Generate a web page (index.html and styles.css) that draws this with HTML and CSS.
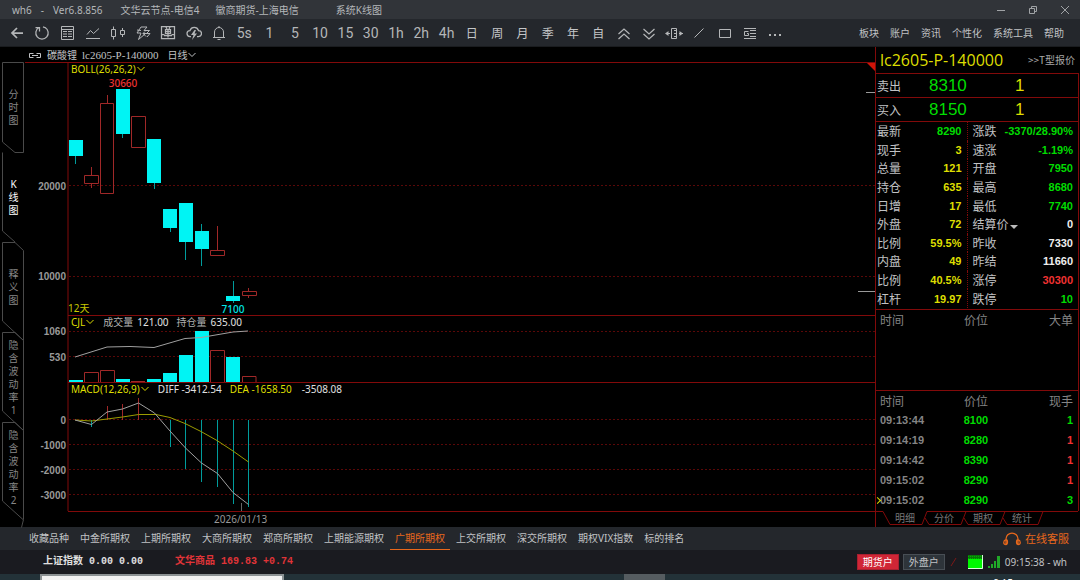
FILE: index.html
```html
<!DOCTYPE html>
<html lang="zh-CN">
<head>
<meta charset="utf-8">
<meta name="viewport" content="width=device-width, initial-scale=1">
<title>wh6 - 系统K线图</title>
<link rel="stylesheet" href="styles.css">
</head>
<body>
<header class="titlebar">
  <span>wh6</span><span>-</span><span>Ver6.8.856</span>
  <span class="node">文华云节点-电信4</span>
  <span class="broker">徽商期货-上海电信</span>
  <span class="view">系统K线图</span>
  <div class="window-buttons">
    <button type="button" aria-label="最小化"><svg width="10" height="10"><path d="M1 5.5h8"/></svg></button>
    <button type="button" aria-label="还原"><svg width="10" height="10"><path d="M1.500 3.500h5v5h-5zM3.500 3.500v-2h5v5h-2"/></svg></button>
    <button type="button" aria-label="关闭"><svg width="10" height="10"><path d="M1 1l8 8M9 1l-8 8"/></svg></button>
  </div>
</header>

<nav class="toolbar" aria-label="工具栏">
  <div class="tools">
    <button type="button" aria-label="返回"><svg width="16" height="16"><path class="bold" d="M14 8H3M8 3L3 8l5 5"/></svg></button>
    <button type="button" aria-label="刷新"><svg width="16" height="16"><path class="medium" d="M5 2.500a6.200 6.200 0 1 0 6 0M1.500 2.500h4v4M9 1.800l3 1.200"/></svg></button>
    <button type="button" aria-label="报价"><svg width="16" height="16"><path d="M2.500 1.500h12v13h-12zM2.500 4.500h12M4 6.500h4M9 6.500h4M4 9h4M9 9h4M4 11.500h4M9 11.500h4"/></svg></button>
    <button type="button" aria-label="分时"><svg width="16" height="16"><path d="M2 9.500l3.500-4 3 3L14 3.500M1 13.500h14"/></svg></button>
    <button type="button" aria-label="K线"><svg width="16" height="16"><path d="M1.500 4.500h4v7h-4zM3.500 1.500v3M3.500 11.500v3M10.500 5.500h4v4h-4zM12.500 3v2.500M12.500 9.500V12"/></svg></button>
    <button type="button" aria-label="闪电下单"><svg width="16" height="16"><path d="M6 2h6L9 5.500h5.500L12 8M6 2L2 8h4l-2.500 6.500L10 9M2 5l4 .5M8 8.500h7M10 6.500L8 8.500l3 3M15 8.500l-3 3.500"/></svg></button>
    <button type="button" aria-label="下单"><svg width="16" height="16"><path class="medium" d="M1.500 1.500h13v12h-13zM1.500 9.500h3M11.500 9.500h3M5.500 4.500h5v4h-5zM5.500 6.500h5M8 4.500v8M4 10.500h8M6 2l1 2M10 2L9 4"/></svg></button>
    <button type="button" aria-label="云条件单"><svg width="16" height="16"><path class="medium" d="M5 11.500H4a3 3 0 0 1 0-6 4.500 4.500 0 0 1 8.500 0 3 3 0 0 1 0 6H11"/><path class="solid" d="M8.500 5L5 10h2.500L6 15l5-6.500H8.500L10 5z"/></svg></button>
    <button type="button" aria-label="预警"><svg width="16" height="16"><path d="M2 12.500h12M3.500 12.500V7a4.500 4.500 0 0 1 9 0v5.500M6.500 14.500h3M8 1v1.500"/></svg></button>
    <button type="button">5s</button>
    <button type="button">1</button>
    <button type="button">5</button>
    <button type="button">10</button>
    <button type="button">15</button>
    <button type="button">30</button>
    <button type="button">1h</button>
    <button type="button">2h</button>
    <button type="button">4h</button>
    <button type="button" class="cjk">日</button>
    <button type="button" class="cjk">周</button>
    <button type="button" class="cjk">月</button>
    <button type="button" class="cjk">季</button>
    <button type="button" class="cjk">年</button>
    <button type="button" class="cjk">自</button>
    <button type="button" aria-label="放大"><svg width="16" height="16"><path class="medium" d="M2.500 9L8 4l5.500 5M2.500 14L8 9l5.500 5"/></svg></button>
    <button type="button" aria-label="缩小"><svg width="16" height="16"><path class="medium" d="M2.500 4L8 9l5.500-5M2.500 9L8 14l5.500-5"/></svg></button>
    <button type="button" aria-label="间距"><svg width="18" height="16"><path d="M6.500 3.500h5v10h-5zM9 5.500h2.500M9 8.500h2.500M9 11.500h2.500M1 8.500h4M14 8.500h4"/><path class="solid" d="M0 8.500L3.500 6v5zM18 8.500L14.500 6v5z"/></svg></button>
    <button type="button" aria-label="画线"><svg width="16" height="16"><path d="M3.500 12.500l9-9"/></svg></button>
    <button type="button" aria-label="矩形"><svg width="16" height="16"><path d="M2.500 4.500h11v8h-11z"/></svg></button>
    <button type="button" aria-label="公告"><svg width="16" height="16"><path d="M2 3.500h12M2 13.500h12M8 5.500h6M8 8.500h6M8 11.500h6M6.500 6.500h-4v4h4v-2H5"/></svg></button>
    <button type="button" aria-label="更多"><svg width="16" height="16"><path class="solid" d="M2 9h2v2H2zM7 9h2v2H7zM12 9h2v2h-2z"/></svg></button>
  </div>
  <div class="menu">
    <button type="button">板块</button>
    <button type="button">账户</button>
    <button type="button">资讯</button>
    <button type="button">个性化</button>
    <button type="button">系统工具</button>
    <button type="button">帮助</button>
  </div>
</nav>

<main class="workspace">
  <nav class="side-tabs" aria-label="图表类型">
    <button type="button"><svg class="edge" width="25" height="92"><path d="M2.500 80V.5h21v90H15L2.500 80"/></svg><span>分时图</span></button>
    <button type="button" class="active"><svg class="edge" width="25" height="92"><path d="M2.500.5V79L15 90"/></svg><span>K线图</span></button>
    <button type="button"><svg class="edge" width="25" height="102"><path d="M2.500 79V.5H15l8.500 8v90L2.500 79"/></svg><span>释义图</span></button>
    <button type="button"><svg class="edge" width="25" height="102"><path d="M2.500 79V.5H15l8.500 8v90L2.500 79"/></svg><span>隐含波动率1</span></button>
    <button type="button"><svg class="edge" width="25" height="108"><path d="M2.500 79V.5H15l8.500 8v89l-2 8M2.500 79l21 19"/></svg><span>隐含波动率2</span></button>
  </nav>

  <section class="charts">
    <div class="chart-head">
      <svg width="14" height="8"><path d="M5.500 2.500h-4v4h4M8.500 2.500h4v4h-4M4 4.500h6"/></svg>
      <span>碳酸锂</span><span class="code">lc2605-P-140000</span>
      <button type="button" class="drop">日线<svg width="10" height="6"><path d="M1.500 1L5 4.500 8.500 1"/></svg></button>
    </div>

    <div class="pane">
      <div class="legend"><button type="button" class="drop yellow">BOLL(26,26,2)<svg width="10" height="6"><path d="M1.500 1L5 4.500 8.500 1"/></svg></button></div>
      <svg class="plot price">
        <svg x="100%" overflow="visible"><path class="corner" d="M-9 0H0V9z"/><path class="mark" d="M-9 30.500h9M-17 229.500h17"/></svg>
        <g transform="translate(-25 -62)">
          <path class="frame" d="M68 62V315"/>
          <line class="frame" x1="25" y1="62.500" x2="110%" y2="62.500"/>
          <line class="grid" x1="69" y1="185.500" x2="110%" y2="185.500"/>
          <line class="grid" x1="69" y1="276.500" x2="110%" y2="276.500"/>
          <path class="wick-down" d="M75.500 156v8M122.500 134v4M154.500 183v6M170.500 228v4M185.500 242v18M201.500 224v42M233.500 281v22"/>
          <path class="down" d="M69 140h14v16H69zM116 89h14v45h-14zM147 139h14v44h-14zM163 209h14v19h-14zM179 203h14v39h-14zM195 231h14v18h-14zM226 296h14v5h-14z"/>
          <path class="up" d="M84.500 175.500h14v8h-14zM91.500 167v8M91.500 184v4M100.500 103.500h13v90h-13zM107.500 95v8M131.500 116.500h14v31h-14zM210.500 250.500h14v5h-14zM217.500 226v24M242.500 291.500h14v4h-14zM248.500 288v3M248.500 296v2"/>
          <text class="axis" x="66" y="190">20000</text>
          <text class="axis" x="66" y="280">10000</text>
          <text class="high" x="123" y="87">30660</text>
          <text class="low" x="233" y="313">7100</text>
          <text class="days" x="68" y="312">12天</text>
        </g>
      </svg>
    </div>

    <div class="pane">
      <div class="legend"><button type="button" class="drop yellow">CJL<svg width="10" height="6"><path d="M1.500 1L5 4.500 8.500 1"/></svg></button><span class="song">成交量</span><span>121.00</span><span class="song">持仓量</span><span>635.00</span></div>
      <svg class="plot volume">
        <g transform="translate(-25 -315)">
          <path class="frame" d="M68 315V382"/>
          <line class="frame" x1="68" y1="315.500" x2="110%" y2="315.500"/>
          <line class="grid" x1="69" y1="331.500" x2="110%" y2="331.500"/>
          <line class="grid" x1="69" y1="356.500" x2="110%" y2="356.500"/>
          <path class="down" d="M69 380h14v2H69zM116 379h14v3h-14zM147 379h14v3h-14zM163 373h14v9h-14zM179 355h14v27h-14zM195 331h14v51h-14zM226 357h14v25h-14z"/>
          <path class="up" d="M84.500 382v-9.500h14v9.500M100.500 382v-11.500h14v11.500M131 381.500h14M210.500 382v-31.500h14v31.500M242.500 382v-5.500h13.500v5.500"/>
          <path class="white-line" d="M75 357l32-10 23-.5 24 1 31-9 16-1 32-5.500 15-1"/>
          <text class="axis" x="66" y="335">1060</text>
          <text class="axis" x="66" y="361">530</text>
        </g>
      </svg>
    </div>

    <div class="pane">
      <div class="legend"><button type="button" class="drop yellow">MACD(12,26,9)<svg width="10" height="6"><path d="M1.500 1L5 4.500 8.500 1"/></svg></button><span>DIFF -3412.54</span><span class="yellow">DEA -1658.50</span><span class="last">-3508.08</span></div>
      <svg class="plot macd">
        <g transform="translate(-25 -382)">
          <path class="frame" d="M68 382V511"/>
          <line class="frame" x1="68" y1="382.500" x2="110%" y2="382.500"/>
          <line class="grid" x1="69" y1="419.500" x2="110%" y2="419.500"/>
          <line class="grid" x1="69" y1="444.500" x2="110%" y2="444.500"/>
          <line class="grid" x1="69" y1="469.500" x2="110%" y2="469.500"/>
          <line class="grid" x1="69" y1="494.500" x2="110%" y2="494.500"/>
          <path class="up" d="M107.500 406v14M122.500 404v16M138.500 398v22M154.500 418v2"/>
          <path class="wick-down" d="M91.500 420v7M170.500 420v27M185.500 420v49M201.500 420v62M217.500 420v67M233.500 420v84M248.500 420v87"/>
          <path class="yellow-line" d="M75 420l16.500 1 15.500-2 15.500-2 16-2.500H156l14 3 15 6 16 8 16 9 16 10.500 15.500 11"/>
          <path class="white-line" d="M75 420l16.500 4.500L107 412l15.500-3 16-6 16 10 15.500 18 15.500 17 16 15 16 10.500 15.500 19 15.500 12"/>
          <path class="tick" d="M241.500 503v8"/>
          <text class="axis" x="66" y="424">0</text>
          <text class="axis" x="66" y="449">-1000</text>
          <text class="axis" x="66" y="474">-2000</text>
          <text class="axis" x="66" y="499">-3000</text>
        </g>
      </svg>
    </div>
    <div class="dates"><time datetime="2026-01-13">2026/01/13</time></div>
  </section>

  <aside class="quote">
    <div class="quote-head"><h1>lc2605-P-140000</h1><a href="#t">&gt;&gt;T型报价</a></div>
    <div class="level"><span>卖出</span><b class="green">8310</b><b class="yellow">1</b></div>
    <div class="level"><span>买入</span><b class="green">8150</b><b class="yellow">1</b></div>
    <div class="facts">
      <table>
        <tr><th>最新</th><td class="green">8290</td><th>涨跌</th><td class="green">-3370/28.90%</td></tr>
        <tr><th>现手</th><td class="yellow">3</td><th>速涨</th><td class="green">-1.19%</td></tr>
        <tr><th>总量</th><td class="yellow">121</td><th>开盘</th><td class="green">7950</td></tr>
        <tr><th>持仓</th><td class="yellow">635</td><th>最高</th><td class="green">8680</td></tr>
        <tr><th>日增</th><td class="yellow">17</td><th>最低</th><td class="green">7740</td></tr>
        <tr><th>外盘</th><td class="yellow">72</td><th>结算价<svg width="10" height="6"><path class="caret" d="M1 1h8L5 5z"/></svg></th><td>0</td></tr>
        <tr><th>比例</th><td class="yellow">59.5%</td><th>昨收</th><td>7330</td></tr>
        <tr><th>内盘</th><td class="yellow">49</td><th>昨结</th><td>11660</td></tr>
        <tr><th>比例</th><td class="yellow">40.5%</td><th>涨停</th><td class="red">30300</td></tr>
        <tr><th>杠杆</th><td class="yellow">19.97</td><th>跌停</th><td class="green">10</td></tr>
      </table>
    </div>
    <div class="big-orders">
      <table class="ticks"><tr><th>时间</th><th>价位</th><th>大单</th></tr></table>
    </div>
    <div class="trades">
      <table class="ticks">
        <tr><th>时间</th><th>价位</th><th>现手</th></tr>
        <tr><td>09:13:44</td><td class="green">8100</td><td class="green">1</td></tr>
        <tr><td>09:14:19</td><td class="green">8280</td><td class="red">1</td></tr>
        <tr><td>09:14:42</td><td class="green">8390</td><td class="red">1</td></tr>
        <tr><td>09:15:02</td><td class="green">8290</td><td class="red">1</td></tr>
        <tr><td class="current">09:15:02</td><td class="green">8290</td><td class="green">3</td></tr>
      </table>
    </div>
    <nav class="detail-tabs" aria-label="明细类型">
      <svg class="outline" width="205" height="16"><path d="M0 .5h8l7 13h32l5-13h151M50 7l4 6.500h32l5-13M89 7l4 6.500h32l5-13M128 7l4 6.500h31l5-13"/></svg>
      <button type="button">明细</button><button type="button">分价</button><button type="button">期权</button><button type="button">统计</button>
    </nav>
  </aside>
</main>

<nav class="markets" aria-label="市场">
  <a href="#m1">收藏品种</a><a href="#m2">中金所期权</a><a href="#m3">上期所期权</a><a href="#m4">大商所期权</a><a href="#m5">郑商所期权</a><a href="#m6">上期能源期权</a><a href="#m7" class="active">广期所期权</a><a href="#m8">上交所期权</a><a href="#m9">深交所期权</a><a href="#m10">期权VIX指数</a><a href="#m11">标的排名</a>
  <button type="button" class="service"><svg width="18" height="16"><path class="medium" d="M3 13V8a6 6 0 0 1 12 0v5M3 8.500c-3 1-3 5 0 5 2 0 2-5 0-5zM15 8.500c3 1 3 5 0 5-2 0-2-5 0-5z"/></svg>在线客服</button>
</nav>

<footer class="status">
  <span class="index">上证指数 0.00 0.00</span>
  <span class="index red">文华商品 169.83 +0.74</span>
  <div class="account">
    <button type="button" class="primary">期货户</button>
    <button type="button">外盘户</button>
    <svg width="10" height="12"><path class="slash" d="M2 10l5-8"/></svg>
    <svg class="gauge" width="15" height="14"><path class="g1" d="M0 0h15v14H0z"/><path class="g2" d="M0 0h15v4H0z"/><path class="g3" d="M0 1.500h15M0 3.500h15"/><path class="g4" d="M0 13.500h14.500V0"/></svg>
    <svg width="14" height="14"><path class="signal" d="M1 11h2v2H1zM4 9h2v4H4zM7 6h2v7H7zM10 1h3v12h-3z"/></svg>
    <span>09:15:38 - wh</span>
  </div>
</footer>
<div class="taskbar"><span class="search"></span><span class="task"></span><span class="time">9:15</span></div>
</body>
</html>
```
FILE: styles.css
```css
* { box-sizing: border-box; }
body {
  margin: 0;
  min-height: 100vh;
  display: flex;
  flex-direction: column;
  overflow: hidden;
  background: #000;
  color: #c0c2c4;
  font: 10px/14px "Noto Sans", "Noto Sans CJK SC", sans-serif;
}
button {
  margin: 0;
  padding: 0;
  border: 0;
  background: none;
  color: inherit;
  font: inherit;
  white-space: nowrap;
}
a { color: inherit; text-decoration: none; white-space: nowrap; }
svg { display: block; fill: none; stroke: currentColor; }
table { border-collapse: collapse; table-layout: fixed; width: 100%; }
th { font-weight: 400; text-align: left; }

.green { color: #00dc00; }
.yellow { color: #dede00; }
.red { color: #f03232; }

.titlebar {
  display: flex;
  align-items: center;
  gap: 9px;
  height: 19px;
  padding: 0 10px 0 12px;
  background: #313439;
  color: #b4b7ba;
}
.node { margin-left: 9px; }
.broker { margin-left: 7px; }
.view { margin-left: 28px; }
.window-buttons { display: flex; gap: 22px; margin-left: auto; color: #a0a3a6; }

.toolbar {
  display: flex;
  justify-content: space-between;
  align-items: center;
  height: 28px;
  padding: 0 16px 0 4px;
  background: #24272c;
  border-bottom: 1px solid #1a1c1f;
}
.tools {
  flex: 0 1 784px;
  display: grid;
  grid-template-columns: repeat(31, 1fr);
  font: 14px/20px Roboto, sans-serif;
}
.tools button { display: flex; justify-content: center; align-items: center; color: #b4b6b8; }
.tools .cjk { font: 12px/20px "Noto Sans CJK SC", sans-serif; color: #c4c6c8; }
.medium { stroke-width: 1.25; }
.bold { stroke-width: 1.75; }
.solid { fill: currentColor; stroke: none; }
.menu { display: flex; gap: 11px; }

.workspace { flex: 1; display: flex; }
.side-tabs {
  width: 25px;
  padding-top: 15px;
  display: flex;
  flex-direction: column;
  color: #858585;
}
.side-tabs button {
  position: relative;
  display: flex;
  align-items: center;
  justify-content: center;
  height: 90px;
  padding: 1px 0 0 2px;
  line-height: 13px;
}
.side-tabs span { width: 10px; white-space: normal; word-break: break-all; }
.side-tabs .active { color: #fff; }
.edge { position: absolute; top: 0; left: 0; color: #4a4a4a; }

.charts { flex: 1; min-width: 0; display: flex; flex-direction: column; }
.chart-head {
  display: flex;
  align-items: center;
  gap: 5px;
  height: 15px;
  padding-left: 3px;
  font-family: "Noto Sans CJK SC", sans-serif;
}
.code { font: 11px/14px "Liberation Serif", serif; }
.drop { display: flex; align-items: center; }
.chart-head .drop { margin-left: 4px; }
.pane { position: relative; }
.legend {
  position: absolute;
  top: 0;
  left: 46px;
  display: flex;
  gap: 8px;
  color: #e0e0e0;
  white-space: nowrap;
}
.song { margin-right: -4px; color: #b0b0b0; }
.last { margin-left: 2px; }
.plot { width: 100%; }
.price { height: 253px; }
.volume { height: 67px; }
.macd { height: 129px; }
.frame { stroke: #820a0a; }
.grid { stroke: #5a0808; stroke-dasharray: 2 2; }
.down { fill: #00f4f4; stroke: none; }
.wick-down { stroke: #009c9c; }
.up { stroke: #a02828; }
.white-line { stroke: #a0a0a0; }
.yellow-line { stroke: #9c9c00; }
.tick { stroke: #666; }
.corner { fill: #d01408; stroke: none; }
.mark { stroke: #999; }
.plot text { stroke: none; }
.axis { fill: #999; font: bold 10px "Liberation Sans", sans-serif; text-anchor: end; }
.high { fill: #f03232; text-anchor: middle; font-weight: 500; }
.low { fill: #00e8e8; text-anchor: middle; font-weight: 500; }
.days { fill: #c8c800; }
.dates {
  flex: 1;
  margin-left: 43px;
  padding-left: 146px;
  border-top: 1px solid #820a0a;
  color: #999;
}

.quote {
  flex: 0 0 205px;
  display: flex;
  flex-direction: column;
  padding-right: 1px;
  border-left: 1px solid #820a0a;
  font: 12px/18px "Noto Sans CJK SC", sans-serif;
}
.quote-head {
  display: flex;
  justify-content: space-between;
  align-items: center;
  height: 26px;
  padding: 0 4px;
}
.quote-head h1 { margin: 0; color: #dede00; font: 16px/24px "Open Sans", sans-serif; }
.quote-head a { font-size: 10px; color: #a8a8a8; }
.level, .facts, .big-orders, .trades { border: 1px solid #820a0a; border-width: 1px 1px 0 0; }
.level {
  display: grid;
  grid-template-columns: 52px 86px 1fr;
  align-items: center;
  height: 24px;
  padding: 1px 0 0 1px;
}
.level b { font: 17px/22px "Liberation Sans", sans-serif; }
.facts { height: 188px; }
.facts table { height: 186px; }
.facts th, .facts td { padding: 0; line-height: 18px; white-space: nowrap; }
.facts th:first-child { width: 30px; padding-left: 1px; }
.facts td:nth-child(2) { width: 61px; padding-right: 5px; border-right: 1px dotted #820a0a; }
.facts th:nth-child(3) { width: 32px; padding-left: 5px; }
.facts td:last-child { padding-right: 5px; }
.facts td, .ticks td { font: bold 11px/18px "Liberation Sans", sans-serif; text-align: right; }
.facts td:not([class]) { color: #eee; }
.facts svg { display: inline-block; vertical-align: -1px; }
.caret { fill: #bbb; stroke: none; }
.big-orders { height: 81px; }
.trades { height: 121px; }
.ticks { color: #858585; }
.ticks th, .ticks td { height: 20px; padding: 0; line-height: 20px; }
.trades th { height: 19px; line-height: 19px; }
.ticks th:first-child, .ticks td:first-child { width: 60px; padding-left: 4px; text-align: left; }
.ticks th:nth-child(2), .ticks td:nth-child(2) { width: 80px; text-align: center; }
.ticks th:last-child, .ticks td:last-child { padding-right: 5px; text-align: right; }
.ticks .current { position: relative; }
.current::before {
  content: "";
  position: absolute;
  left: -1px;
  top: 8px;
  width: 4px;
  height: 4px;
  border: 1px solid #dede00;
  border-width: 1px 1px 0 0;
  transform: rotate(45deg);
}
.detail-tabs {
  position: relative;
  display: flex;
  gap: 19px;
  padding-left: 19px;
  color: #777;
  font-size: 10px;
  line-height: 14px;
}
.outline { position: absolute; top: 0; left: -1px; color: #820a0a; }

.markets {
  display: flex;
  align-items: stretch;
  gap: 1px;
  height: 23px;
  padding: 0 11px 0 24px;
  background: #24272c;
  line-height: 22px;
}
.markets a { padding: 0 5px; }
.markets .active { color: #e8681c; border-bottom: 1px solid #e8681c; }
.service {
  display: flex;
  align-items: center;
  gap: 4px;
  margin-left: auto;
  color: #e8681c;
  font-size: 11px;
}
.status {
  display: flex;
  align-items: center;
  height: 24px;
  padding: 0 13px 0 43px;
  background: #1a1b20;
}
.index {
  width: 132px;
  color: #e0e0e0;
  font: bold 10px/14px "Liberation Mono", "Noto Sans CJK SC", monospace;
  white-space: nowrap;
}
.index.red { color: #e03438; }
.account { display: flex; align-items: center; gap: 4px; margin-left: auto; }
.account button {
  height: 16px;
  padding: 0 5px;
  border: 1px solid #484e54;
  background: #2e343a;
  line-height: 14px;
}
.account .primary { border-color: #a82030; background: #d02636; color: #fff; }
.slash { stroke: #7c1818; }
.gauge { margin-left: 5px; }
.g1 { fill: #00f800; stroke: none; }
.g2 { fill: #087808; stroke: none; }
.g3 { stroke: #00b400; stroke-dasharray: 1 1; }
.g4 { stroke: #d8ffd8; }
.signal { fill: #20a828; stroke: none; }
.taskbar {
  display: flex;
  height: 6px;
  overflow: hidden;
  padding-left: 40px;
  background: #233238;
}
.search { width: 244px; border: 2px solid #8c9294; border-bottom: 0; background: #f2f2f2; }
.task { width: 41px; margin-left: 340px; background: #555c60; }
.time { margin: 2px 67px 0 auto; color: #fff; }
```
